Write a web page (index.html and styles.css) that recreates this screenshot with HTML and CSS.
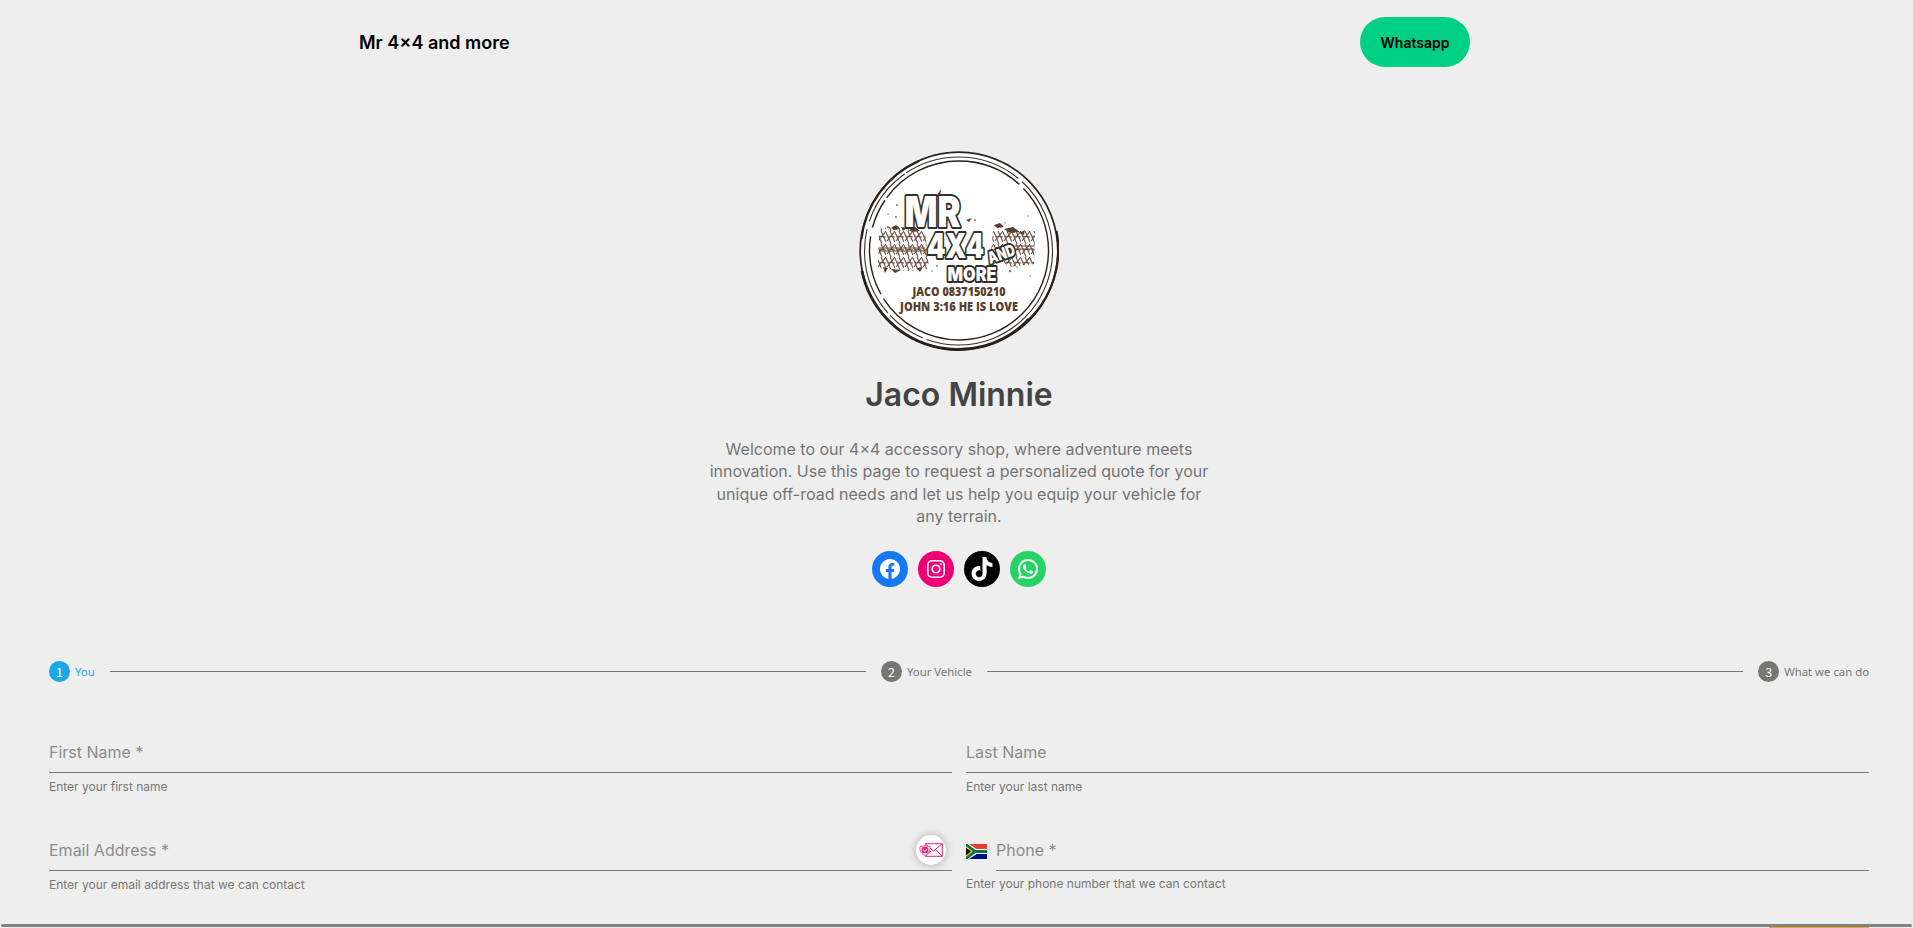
FILE: index.html
```html
<!DOCTYPE html>
<html lang="en">
<head>
<meta charset="utf-8">
<title>Mr 4×4 and more</title>
<link rel="stylesheet" href="styles.css">
</head>
<body>
<div class="page">
  <header class="site-header">
    <div class="site-title">Mr 4×4 and more</div>
    <a class="whatsapp-button">Whatsapp</a>
  </header>

  <main>
    <section class="profile">
      <svg class="logo" viewBox="0 0 200 200">
        <defs>
          <pattern id="tread" width="9" height="13" patternUnits="userSpaceOnUse" y="80">
            <path d="M0 1L5 13M4 0L9 11M9 0L1 10M1 5L9 6" stroke="#6b4f40" stroke-width="1.100" fill="none"/>
          </pattern>
        </defs>
        <circle cx="100" cy="100" r="99" fill="#fff"/>
        <circle cx="100" cy="100" r="98.800" fill="none" stroke="#2a211c" stroke-width="1.700"/>
        <path d="M3 120A98 98 0 0 0 170 168" fill="none" stroke="#2a211c" stroke-width="2.800"/>
        <path d="M60 10A97.500 97.500 0 0 0 2.500 88" fill="none" stroke="#2a211c" stroke-width="2"/>
        <path d="M197.500 80A98 98 0 0 1 160 177" fill="none" stroke="#2a211c" stroke-width="2.200"/>
        <circle cx="99.500" cy="100" r="94" fill="none" stroke="#3a302a" stroke-width="1.100" stroke-dasharray="180 4 40 3 90 8 60 2 120 5"/>
        <circle cx="100" cy="99.500" r="89.500" fill="none" stroke="#2a211c" stroke-width="1.400" stroke-dasharray="230 5 60 9 30 3 150 6"/>
        <path d="M20 78L34 75 66 79 70 118 50 120 19 117ZM134 80L176 80 175 113 150 116 132 100Z" fill="url(#tread)"/>
        <path d="M20 97H66M20 100H66M142 95H175M148 98H175" stroke="#6b4f40" stroke-width="1.200"/>
        <path d="M32 77l5-3 4 4-6 1zM50 79l6-3 5 4-8 1zM135 74l6-2 4 4-7 1zM145 78l9-2 7 5-10 1zM24 116l5 1-3 5zM32 118l10 1-6 3zM58 117l6-1-3 5zM107 69l6-2-3 4zM42 76l5 1-3 3zM160 82l6-3-1 5z" fill="#5a3d2d"/>
        <g fill="#8a7468"><circle cx="38" cy="54" r="1"/><circle cx="29" cy="63" r=".8"/><circle cx="37" cy="66" r="1"/><circle cx="29" cy="76" r="1"/><circle cx="116" cy="69" r="1"/><circle cx="169" cy="65" r=".8"/><circle cx="78" cy="115" r="1"/><circle cx="73" cy="120" r=".8"/><circle cx="151" cy="120" r="1.200"/><circle cx="158" cy="116" r=".8"/><circle cx="171" cy="125" r=".8"/><circle cx="146" cy="72" r=".8"/></g>
        <path d="M77 46l5-8-1 8" fill="#4b372c"/>
        <g class="logo-outline">
          <text x="45.500" y="75.500" font-size="42" textLength="56" lengthAdjust="spacingAndGlyphs" stroke-width="4">MR</text>
          <text x="68" y="106.500" font-size="34" textLength="57" lengthAdjust="spacingAndGlyphs" stroke-width="4">4X4</text>
          <text x="88.500" y="129.800" font-size="19" textLength="49" lengthAdjust="spacingAndGlyphs" stroke-width="4">MORE</text>
          <text x="131" y="113" font-size="16" textLength="28" lengthAdjust="spacingAndGlyphs" stroke-width="4" transform="rotate(-20 131 113)">AND</text>
        </g>
        <g class="logo-contact">
          <text x="53.500" y="144.500" font-size="12.800" textLength="93" lengthAdjust="spacingAndGlyphs">JACO 0837150210</text>
          <text x="41" y="159.500" font-size="12.800" textLength="118" lengthAdjust="spacingAndGlyphs">JOHN 3:16 HE IS LOVE</text>
        </g>
      </svg>
      <h1 class="name">Jaco Minnie</h1>
      <p class="intro">Welcome to our 4×4 accessory shop, where adventure meets<br>innovation. Use this page to request a personalized quote for your<br>unique off-road needs and let us help you equip your vehicle for<br>any terrain.</p>
      <div class="social">
        <a class="social-link facebook"><svg viewBox="0 0 24 24"><path d="M12 2C6.500 2 2 6.500 2 12c0 5 3.700 9.100 8.400 9.900v-7H7.900V12h2.500V9.800c0-2.500 1.500-3.900 3.800-3.900 1.100 0 2.200.2 2.200.2v2.500h-1.300c-1.200 0-1.600.8-1.600 1.600V12h2.800l-.4 2.900h-2.300v7C18.300 21.100 22 17 22 12c0-5.500-4.500-10-10-10z"/></svg></a>
        <a class="social-link instagram"><svg viewBox="0 0 24 24"><rect x="3.800" y="3.800" width="16.400" height="16.400" rx="4.300" fill="none" stroke="#fff" stroke-width="1.620"/><circle cx="12" cy="12" r="3.800" fill="none" stroke="#fff" stroke-width="1.620"/><circle cx="16.800" cy="7.200" r="1.080"/></svg></a>
        <a class="social-link tiktok"><svg viewBox="0 0 32 32"><path d="M16.708 0.027c1.745-0.027 3.480-0.011 5.213-0.027 0.105 2.041 0.839 4.120 2.333 5.563 1.491 1.479 3.600 2.156 5.652 2.385v5.369c-1.923-0.063-3.855-0.463-5.600-1.291-0.760-0.344-1.468-0.787-2.161-1.240-0.009 3.896 0.016 7.787-0.025 11.667-0.104 1.864-0.719 3.719-1.803 5.255-1.744 2.557-4.771 4.224-7.880 4.276-1.907 0.109-3.812-0.411-5.437-1.369-2.693-1.588-4.588-4.495-4.864-7.615-0.032-0.667-0.043-1.333-0.016-1.984 0.240-2.537 1.495-4.964 3.443-6.615 2.208-1.923 5.301-2.839 8.197-2.297 0.027 1.975-0.052 3.948-0.052 5.923-1.323-0.428-2.869-0.308-4.025 0.495-0.844 0.547-1.485 1.385-1.819 2.333-0.276 0.676-0.197 1.427-0.181 2.145 0.317 2.188 2.421 4.027 4.667 3.828 1.489-0.016 2.916-0.880 3.692-2.145 0.251-0.443 0.532-0.896 0.547-1.417 0.131-2.385 0.079-4.760 0.095-7.145 0.011-5.375-0.016-10.735 0.025-16.093z"/></svg></a>
        <a class="social-link whatsapp"><svg viewBox="0 0 24 24"><path d="M12.012 2C6.506 2 2.023 6.478 2.021 11.984C2.020 13.744 2.481 15.463 3.355 16.977L2 22L7.232 20.764C8.691 21.560 10.334 21.978 12.006 21.979C17.515 21.979 21.995 17.499 21.998 11.994C22 9.325 20.962 6.816 19.076 4.928C17.190 3.041 14.684 2.001 12.012 2zM12.010 4C14.146 4.001 16.153 4.834 17.662 6.342C19.171 7.852 20 9.858 19.998 11.992C19.996 16.396 16.414 19.979 12.008 19.979C10.675 19.978 9.354 19.643 8.191 19.008L7.518 18.641L6.773 18.816L4.805 19.281L5.285 17.496L5.502 16.695L5.088 15.977C4.390 14.769 4.020 13.387 4.021 11.984C4.023 7.582 7.607 4 12.010 4zM8.477 7.375C8.310 7.375 8.040 7.438 7.811 7.688C7.582 7.937 6.936 8.540 6.936 9.768C6.936 10.996 7.830 12.183 7.955 12.350C8.079 12.516 9.682 15.115 12.219 16.115C14.327 16.946 14.755 16.782 15.213 16.740C15.671 16.699 16.690 16.138 16.898 15.555C17.106 14.972 17.107 14.470 17.045 14.367C16.983 14.263 16.816 14.201 16.566 14.076C16.317 13.951 15.090 13.349 14.861 13.266C14.632 13.183 14.465 13.141 14.299 13.391C14.133 13.641 13.656 14.201 13.510 14.367C13.364 14.534 13.219 14.557 12.969 14.432C12.719 14.306 11.915 14.041 10.961 13.191C10.219 12.530 9.718 11.715 9.572 11.465C9.427 11.216 9.559 11.079 9.684 10.955C9.796 10.843 9.932 10.664 10.057 10.518C10.181 10.372 10.224 10.268 10.307 10.102C10.390 9.936 10.347 9.789 10.285 9.664C10.223 9.539 9.738 8.307 9.516 7.813C9.329 7.398 9.131 7.388 8.953 7.381z"/></svg></a>
      </div>
    </section>

    <form class="quote-form">
      <div class="stepper">
        <div class="step step-active"><span class="step-number">1</span><span>You</span></div>
        <div class="step-line"></div>
        <div class="step"><span class="step-number">2</span><span>Your Vehicle</span></div>
        <div class="step-line"></div>
        <div class="step"><span class="step-number">3</span><span>What we can do</span></div>
      </div>
      <div class="fields">
        <div class="field">
          <div class="input">First Name *</div>
          <div class="hint">Enter your first name</div>
        </div>
        <div class="field">
          <div class="input">Last Name</div>
          <div class="hint">Enter your last name</div>
        </div>
        <div class="field">
          <div class="input">Email Address *
            <span class="mail-badge"><svg viewBox="0 0 24 14" fill="none" stroke="#e5257f"><path d="M6 .7H23.300V13.300H6M6 .7L14.500 8 23.300 .7M12 7.500L13.500 6M23.300 13.300L16.500 6.500M6 13.300L12 8" stroke-width="1"/><path d="M6 2.200C4 3.500 2.500 3.200 1 3.500C.5 8 2.500 11 6 12.500C9.500 11 11.500 8 11 3.500C9.500 3.200 8 3.500 6 2.200z" fill="#fff" stroke-width=".8"/><circle cx="6" cy="7" r="3.600" fill="#e5257f" stroke="none"/><path d="M4.200 6.500L6 8.500 8 6" stroke="#fff" stroke-width="1"/></svg></span>
          </div>
          <div class="hint">Enter your email address that we can contact</div>
        </div>
        <div class="field">
          <div class="phone">
            <svg class="flag" viewBox="0 0 21 15" preserveAspectRatio="none"><path fill="#e23d2e" d="M0 0h21v7.500H0z"/><path fill="#000c8a" d="M0 7.500h21V15H0z"/><path fill="#fff" d="M0 0H3L10.500 5H21V10H10.500L3 15H0z"/><path fill="#007749" d="M0 0H1.500L9.500 6H21V9H9.500L1.500 15H0z"/><path fill="#ffb81c" d="M0 2L7 7.500 0 13z"/><path fill="#000" d="M0 3.700L5 7.500 0 11.300z"/></svg>
            <div class="input">Phone *</div>
          </div>
          <div class="hint hint-phone">Enter your phone number that we can contact</div>
        </div>
      </div>
      <div class="form-actions"><span class="next-button"></span></div>
    </form>
  </main>
  <div class="bottom-bar"></div>
</div>
</body>
</html>
```
FILE: styles.css
```css
* { box-sizing: border-box; }
html, body { margin: 0; height: 100%; overflow: hidden; }
body { background: #eee; font-family: Inter, "Liberation Sans", sans-serif; }
.page { position: relative; height: 928px; overflow: hidden; }

.site-header { display: flex; align-items: center; justify-content: space-between; width: 1111px; height: 84px; margin-left: 359px; }
.site-title { padding-top: 1px; font-size: 18px; font-weight: 600; color: #000; }
.whatsapp-button { width: 110px; height: 50px; border-radius: 25px; background: #00d084; color: #000; font-size: 14px; font-weight: 600; line-height: 52px; text-align: center; }

.profile { display: flex; flex-direction: column; align-items: center; padding-top: 67px; width: 1918px; }
.logo { display: block; width: 200px; height: 200px; }
.logo-outline { font-family: Inter, sans-serif; font-weight: 900; fill: #fff; stroke: #30302f; stroke-linejoin: round; paint-order: stroke; }
.logo-contact { font-family: "Open Sans", sans-serif; font-weight: 800; fill: #5b3f2d; }
.name { margin: 24px 0 0; font-size: 32px; line-height: 40px; font-weight: 600; color: #444; }
.intro { margin: 23px 0 0; font-size: 16px; line-height: 22.400px; text-align: center; color: #757575; }
.social { display: flex; gap: 10px; margin-top: 23.400px; }
.social-link { display: flex; width: 36px; height: 36px; padding: 6px; border-radius: 50%; }
.social-link svg { width: 24px; height: 24px; fill: #fff; }
.facebook { background: #1778f2; }
.instagram { background: #f00075; }
.tiktok { background: #000; }
.whatsapp { background: #25d366; }

.quote-form { width: 1820px; margin: 74px 0 0 49px; }
.stepper { display: flex; align-items: center; gap: 15px; height: 21px; font-family: "Noto Sans", sans-serif; font-size: 11.350px; color: #777771; }
.step { display: flex; align-items: center; gap: 5px; white-space: nowrap; }
.step-number { width: 21px; height: 21px; border-radius: 50%; background: #777771; color: #fff; font-family: "Noto Sans CJK SC", sans-serif; font-size: 12.500px; line-height: 22px; text-align: center; }
.step-active { color: #1ba8e4; }
.step-active .step-number { background: #1ba8e4; }
.step-line { flex: 1; height: 1px; background: #777771; }

.fields { display: grid; grid-template-columns: 903px 903px; column-gap: 14px; grid-auto-rows: 98px; padding-top: 50px; }
.input { position: relative; height: 41px; line-height: 41px; border-bottom: 1px solid #777771; font-size: 16px; color: #8b8b89; }
.hint { margin-top: 4px; font-size: 12px; line-height: 20px; color: #777771; }
.hint-phone { margin-top: 3px; }
.phone { display: flex; align-items: center; gap: 9px; }
.phone .input { flex: 1; }
.flag { width: 21px; height: 15px; margin-top: 2px; }
.mail-badge { position: absolute; right: 6px; top: 5px; display: flex; align-items: center; justify-content: center; width: 30px; height: 30px; border-radius: 50%; background: #fff; box-shadow: 0 0 8px rgba(0, 0, 0, .3); }
.mail-badge svg { width: 24px; height: 14px; }

.form-actions { display: flex; justify-content: flex-end; margin-top: -1px; }
.next-button { width: 100px; height: 40px; background: #f5a11c; }
.bottom-bar { position: absolute; left: 1px; right: 1px; top: 924px; height: 3px; border-radius: 2px; background: #808381; }
```
